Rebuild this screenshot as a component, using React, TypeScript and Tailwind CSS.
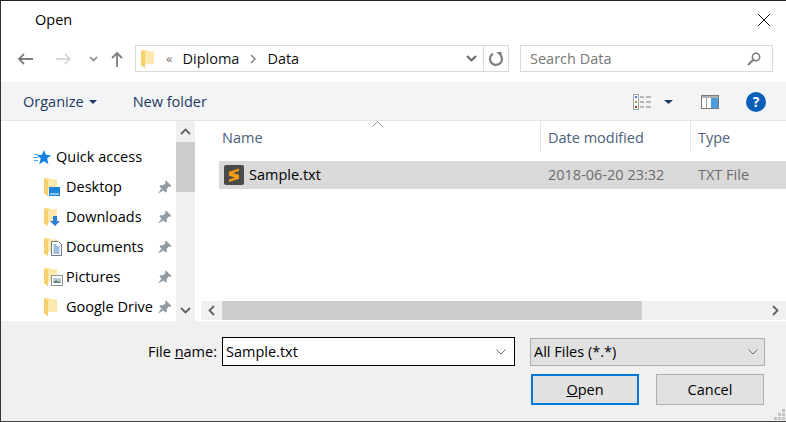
import type { ReactNode } from 'react';

const FONT = "font-['Open_Sans','Noto_Sans',sans-serif]";

const Folder = ({ className = '' }: { className?: string }) => (
  <svg width="13" height="18" viewBox="0 0 13 18" className={className}>
    <path d="M0 0h5l1 1.500H13V14H3L0 13z" fill="#fbe08f" />
    <path d="M0 .500 4 2.500V18L0 15.500z" fill="#f5cf6b" />
    <path d="M4 2.500h9V14H4z" fill="#fde9ad" />
  </svg>
);

const Pin = () => (
  <svg width="14" height="14" viewBox="0 0 14 14" className="shrink-0">
    <path d="M8 .5 13.500 6 12 7 10.500 6.500 8.500 9.500 9 11.500 7.500 12.500 1.500 6.500 2.500 5 4.500 5.500 7.500 3.500 7 2z" fill="#8f9aa3" />
    <path d="M3.500 8.500 0 13.500 5.500 10.500z" fill="#8f9aa3" />
  </svg>
);

const Star = () => (
  <svg width="18" height="15" viewBox="0 0 18 15" className="shrink-0">
    <path d="M11 0l2 4.800 5 .4-3.800 3.400 1.200 5.700-4.400-3-4.800 3 1.500-5.700-3.800-3.400 5-.4z" fill="#1581e0" />
    <path d="M1 4.500h4M0 7.500h5M1 10.500h4" stroke="#4aa3ea" strokeWidth="1" />
  </svg>
);

const Desktop = () => (
  <svg width="11" height="9" viewBox="0 0 11 9" className="-ml-[8px] mt-[9px] shrink-0">
    <rect width="11" height="9" fill="#1b87dc" />
    <rect x="1" y="6.500" width="9" height="1" fill="#ffffff" />
  </svg>
);

const Download = () => (
  <svg width="10" height="11" viewBox="0 0 10 11" className="-ml-[7px] mt-[8px] shrink-0">
    <path d="M3 0h4v5h3l-5 5-5-5h3z" fill="#2a7fd5" />
  </svg>
);

const Doc = () => (
  <svg width="11" height="15" viewBox="0 0 11 15" className="-ml-[6px] mt-[3px] shrink-0">
    <path d="M.5.500h7l3 3v11H.5z" fill="#fff" stroke="#6d7a85" />
    <path d="M2.500 6h6M2.500 8h6M2.500 10h6M2.500 12h6M2.500 4h3" stroke="#3f7fbf" />
  </svg>
);

const Picture = () => (
  <svg width="12" height="11" viewBox="0 0 12 11" className="-ml-[6px] mt-[7px] shrink-0">
    <rect x=".5" y=".5" width="11" height="10" fill="#fff" stroke="#8b9298" />
    <rect x="2" y="3" width="8" height="5" fill="#b9cfdd" />
    <path d="M2 8l3-3 2 2 1-1 2 2z" fill="#5f7f65" />
  </svg>
);

const NavRow = ({ label, icon }: { label: string; icon?: ReactNode }) => (
  <div className="h-[30px] flex items-center pl-[43px] pr-[4px] shrink-0">
    <div className="flex w-[22px] shrink-0 h-[18px]">
      <Folder className="shrink-0" />
      {icon}
    </div>
    <span className="flex-1 whitespace-nowrap text-black">{label}</span>
    <Pin />
  </div>
);

const Chevron = ({ up = false, className = '' }: { up?: boolean; className?: string }) => (
  <svg width="11" height="7" viewBox="0 0 11 7" className={className}>
    <path d={up ? 'M1 6l4.500-4.500L10 6' : 'M1 1l4.500 4.500L10 1'} fill="none" stroke="#606060" strokeWidth="1.800" />
  </svg>
);

const SmallChevron = ({ className = '' }: { className?: string }) => (
  <svg width="10" height="6" viewBox="0 0 10 6" className={className}>
    <path d="M.5.500 5 5 9.500.500" fill="none" stroke="#6a6a6a" strokeWidth="1" />
  </svg>
);

const Side = ({ left = false }: { left?: boolean }) => (
  <svg width="7" height="11" viewBox="0 0 7 11">
    <path d={left ? 'M6 1 1.500 5.500 6 10' : 'M1 1l4.500 4.500L1 10'} fill="none" stroke="#606060" strokeWidth="1.800" />
  </svg>
);

export default function App() {
  return (
    <div className={`w-[786px] h-[422px] flex flex-col overflow-hidden bg-white text-[14.5px] border-t border-b border-l border-t-[#222] border-b-[#444] border-l-[#333] ${FONT}`}>
      {/* title */}
      <div className="h-[37px] shrink-0 flex items-center justify-between pl-[34px] pr-[15px]">
        <span className="text-black">Open</span>
        <svg width="14" height="14" viewBox="0 0 14 14">
          <path d="M1 1l12 12M13 1 1 13" stroke="#111" strokeWidth="1" />
        </svg>
      </div>

      {/* nav */}
      <div className="h-[44px] shrink-0 flex items-start pt-[7px] pr-[13px]">
        <div className="flex items-center h-[27px] w-[134px] shrink-0 pl-[16px]">
          <svg width="16" height="12" viewBox="0 0 16 12">
            <path d="M16 6H2M7 1 2 6l5 5" fill="none" stroke="#7e7e7e" strokeWidth="1.800" />
          </svg>
          <svg width="16" height="12" viewBox="0 0 16 12" className="ml-[23px]">
            <path d="M0 6h14M9 1l5 5-5 5" fill="none" stroke="#d8d8d8" strokeWidth="1.800" />
          </svg>
          <svg width="9" height="6" viewBox="0 0 9 6" className="ml-[17px]">
            <path d="M1 1l3.500 3.500L8 1" fill="none" stroke="#8a8a8a" strokeWidth="1.600" />
          </svg>
          <svg width="12" height="16" viewBox="0 0 12 16" className="ml-[13px]">
            <path d="M6 16V2M1 7l5-5 5 5" fill="none" stroke="#7e7e7e" strokeWidth="1.800" />
          </svg>
        </div>
        <div className="h-[27px] w-[374px] shrink-0 flex items-center border border-[#d9d9d9] pl-[5px]">
          <Folder />
          <span className="ml-[12px] text-[#777] text-[13px] leading-none">«</span>
          <span className="ml-[10px] text-[#111]">Diploma</span>
          <svg width="6" height="10" viewBox="0 0 6 10" className="ml-[11px]">
            <path d="M1 1l4 4-4 4" fill="none" stroke="#777" strokeWidth="1.300" />
          </svg>
          <span className="ml-[11px] text-[#111]">Data</span>
          <div className="flex-1" />
          <Chevron className="mr-[6px]" />
          <div className="w-[1px] h-full bg-[#d9d9d9]" />
          <svg width="16" height="16" viewBox="0 0 16 16" className="mx-[4px]">
            <path d="M12.500 4A6 6 0 1 1 5 2.700" fill="none" stroke="#7e7e7e" strokeWidth="2.200" />
            <path d="M8.500 1h5v5.500z" fill="#7e7e7e" />
          </svg>
        </div>
        <div className="ml-[11px] h-[27px] flex-1 flex items-center justify-between border border-[#d9d9d9] pl-[9px] pr-[11px]">
          <span className="text-[#777]">Search Data</span>
          <svg width="14" height="14" viewBox="0 0 14 14">
            <circle cx="9" cy="5" r="3.700" fill="none" stroke="#7a7a7a" strokeWidth="1.500" />
            <path d="M6 8l-5 5" stroke="#7a7a7a" strokeWidth="2" />
          </svg>
        </div>
      </div>

      {/* toolbar */}
      <div className="h-[39px] shrink-0 flex items-center bg-[#f3f4f6] border-b border-[#e5e5e5] pl-[22px] pr-[20px] pt-[1px]">
        <span className="text-[#1f3a63]">Organize</span>
        <svg width="8" height="4" viewBox="0 0 8 4" className="ml-[5px]">
          <path d="M0 0h8L4 4z" fill="#1f3a63" />
        </svg>
        <span className="ml-[36px] text-[#1f3a63]">New folder</span>
        <div className="flex-1" />
        <svg width="19" height="16" viewBox="0 0 19 16">
          <rect x=".5" y=".5" width="5" height="15" fill="#fff" stroke="#a0a0a0" />
          <rect x="2" y="2" width="2" height="2" fill="#3a7fb5" />
          <rect x="2" y="7" width="2" height="2" fill="#9a9a2a" />
          <rect x="2" y="12" width="2" height="2" fill="#a83a20" />
          <path d="M7 3h4M13 3h5M7 8h4M13 8h5M7 13h4M13 13h5" stroke="#7a7a7a" />
        </svg>
        <svg width="9" height="4" viewBox="0 0 9 4" className="ml-[12px]">
          <path d="M0 0h9L4.500 4z" fill="#1f3a63" />
        </svg>
        <svg width="18" height="14" viewBox="0 0 18 14" className="ml-[28px]">
          <rect x=".5" y=".5" width="17" height="13" fill="#fff" stroke="#7a7a7a" />
          <rect x="10" y="1" width="7" height="12" fill="#4a9ae0" />
          <rect x="5" y="1" width="1" height="12" fill="#a0a0a0" />
          <rect x="1" y="1" width="16" height="2" fill="#b0b0b0" />
        </svg>
        <div className="ml-[27px] w-[20px] h-[20px] rounded-full bg-[#0a5fb8] flex items-center justify-center text-white text-[14px] font-bold leading-none">?</div>
      </div>

      {/* main */}
      <div className="h-[200px] shrink-0 flex">
        <div className="w-[175px] shrink-0 overflow-hidden pt-[21px] flex flex-col">
          <div className="h-[30px] flex items-center pl-[32px] shrink-0">
            <Star />
            <span className="ml-[5px] text-black">Quick access</span>
          </div>
          <NavRow label="Desktop" icon={<Desktop />} />
          <NavRow label="Downloads" icon={<Download />} />
          <NavRow label="Documents" icon={<Doc />} />
          <NavRow label="Pictures" icon={<Picture />} />
          <NavRow label="Google Drive" />
        </div>
        <div className="w-[19px] shrink-0 bg-[#f0f0f0] flex flex-col items-center">
          <div className="h-[21px] w-full flex items-center justify-center"><Chevron up /></div>
          <div className="h-[50px] w-full bg-[#cdcdcd]" />
          <div className="flex-1" />
          <div className="h-[21px] w-full flex items-center justify-center"><Chevron /></div>
        </div>
        <div className="w-[3px] shrink-0 bg-white" />
        <div className="flex-1 min-w-0 flex flex-col">
          <div className="h-[31px] shrink-0 flex text-[#4c607a] relative">
            <div className="w-[343px] pl-[24px] pt-[6px] border-r border-[#e5e5e5]">Name</div>
            <div className="w-[150px] pl-[7px] pt-[6px] border-r border-[#e5e5e5]">Date modified</div>
            <div className="flex-1 pl-[7px] pt-[6px]">Type</div>
            <svg width="11" height="6" viewBox="0 0 11 6" className="absolute left-[174px] top-0">
              <path d="M.5 5.500 5.500.500l5 5" fill="none" stroke="#8a8a8a" />
            </svg>
          </div>
          <div className="h-[9px] shrink-0" />
          <div className="ml-[21px] h-[28px] shrink-0 bg-[#d9d9d9] flex items-center">
            <svg width="20" height="20" viewBox="0 0 20 20" className="ml-[5px] shrink-0">
              <rect width="20" height="20" rx="2" fill="#4a4a4a" />
              <path d="M15 3.500 5 6.800v4l6 1.800-6 2V17l10-3.300v-4L9 7.900 15 6z" fill="#f79a0c" />
            </svg>
            <span className="ml-[5px] w-[299px] text-black">Sample.txt</span>
            <span className="w-[150px] text-[#6d6d6d]">2018-06-20 23:32</span>
            <span className="text-[#6d6d6d]">TXT File</span>
          </div>
          <div className="flex-1" />
          <div className="ml-[3px] h-[19px] mb-[1px] shrink-0 bg-[#f0f0f0] flex items-center">
            <div className="w-[21px] flex justify-center"><Side left /></div>
            <div className="w-[420px] h-full bg-[#cdcdcd]" />
            <div className="flex-1" />
            <div className="w-[21px] flex justify-center"><Side /></div>
          </div>
        </div>
      </div>

      {/* footer */}
      <div className="flex-1 min-h-0 bg-[#f0f0f0] flex flex-col text-black">
        <div className="flex items-center mt-[16px]">
          <span className="w-[221px] text-right pr-[5px] shrink-0">File <span className="underline">n</span>ame:</span>
          <div className="w-[293px] h-[29px] shrink-0 bg-white border border-black flex items-center justify-between pl-[3px] pr-[8px]">
            <span>Sample.txt</span>
            <SmallChevron />
          </div>
          <div className="ml-[15px] w-[235px] h-[28px] shrink-0 bg-[#e1e1e1] border border-[#adadad] flex items-center justify-between pl-[3px] pr-[6px]">
            <span>All Files (*.*)</span>
            <SmallChevron />
          </div>
        </div>
        <div className="flex mt-[8px] pl-[530px]">
          <button className="w-[108px] h-[31px] bg-[#e1e1e1] border-2 border-[#0078d7]"><span className="underline">O</span>pen</button>
          <button className="ml-[17px] w-[108px] h-[31px] bg-[#e1e1e1] border border-[#adadad]">Cancel</button>
        </div>
        <div className="flex-1 flex justify-end items-end pr-[1px]">
          <svg width="12" height="12" viewBox="0 0 12 12">
            <path d="M9 0h3v3H9zM5 4h3v3H5zM9 4h3v3H9zM1 8h3v3H1zM5 8h3v3H5zM9 8h3v3H9z" fill="#c4c4c4" />
          </svg>
        </div>
      </div>
    </div>
  );
}
